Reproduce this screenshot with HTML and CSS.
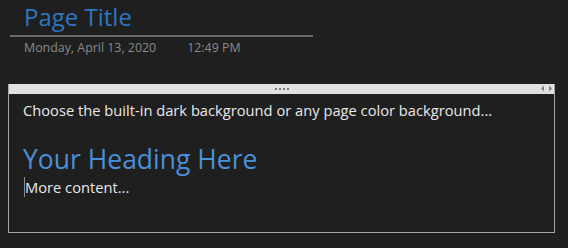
FILE: index.html
```html
<!DOCTYPE html>
<html lang="en">
<head>
    <meta charset="UTF-8">
    <title>Page Title</title>
    <link rel="stylesheet" href="styles.css">
</head>
<body>
    <!-- page header -->
    <div class="page-head">
        <h1 class="page-title">Page Title</h1>
        <div class="page-date">
            <span>Monday, April 13, 2020</span>
            <span>12:49 PM</span>
        </div>
    </div>

    <!-- note container -->
    <div class="note">
        <div class="note-bar">
            <div class="grip"><i></i><i></i><i></i><i></i></div>
            <div class="arrows">
                <svg width="11" height="7" viewBox="0 0 11 7">
                    <path d="M3 0.5 L0 3.5 L3 6.5 Z" fill="#808080"/>
                    <path d="M8 0.5 L11 3.5 L8 6.5 Z" fill="#808080"/>
                </svg>
            </div>
        </div>
        <div class="note-body">
            <p class="line">Choose the built-in dark background or any page color background...</p>
            <h2 class="heading">Your Heading Here</h2>
            <p class="line caret">More content...</p>
        </div>
    </div>
</body>
</html>
```

FILE: styles.css
```css
* {
    margin: 0;
    padding: 0;
    box-sizing: border-box;
}

body {
    background: #1f1f1f;
    font-family: "Open Sans", "Noto Sans", sans-serif;
    color: #e8e8e8;
}

.page-head {
    margin-left: 10px;
    width: 303px;
    padding-top: 1px;
}

.page-title {
    font-weight: 400;
    font-size: 24px;
    line-height: 32px;
    color: #2f75c0;
    padding-left: 14px;
    border-bottom: 2px solid #6a6a6a;
    height: 36px;
}

.page-date {
    display: flex;
    gap: 31px;
    padding-left: 14px;
    padding-top: 3px;
    font-size: 12.4px;
    line-height: 16px;
    color: #8a8a8a;
}

.note {
    margin: 28px 0 0 8px;
    width: 547px;
    height: 149px;
    border: 1px solid #a6a6a6;
    border-top: none;
}

.note-bar {
    height: 10px;
    background: #e0e0e0;
    position: relative;
    display: flex;
    justify-content: center;
    align-items: center;
}

.grip {
    display: flex;
    gap: 2px;
}

.grip i {
    width: 2px;
    height: 2px;
    background: #7a7a7a;
}

.arrows {
    position: absolute;
    right: 2px;
    top: 1px;
    display: flex;
}

.note-body {
    padding: 6px 0 0 14px;
}

.line {
    font-size: 14.7px;
    line-height: 20px;
}

.heading {
    font-weight: 400;
    font-size: 26.5px;
    line-height: 30px;
    color: #4a90d9;
    margin-top: 24px;
}

.caret {
    margin-top: 3px;
    border-left: 1px solid #8a8a8a;
    margin-left: 1px;
    width: fit-content;
    padding-right: 4px;
}
```
